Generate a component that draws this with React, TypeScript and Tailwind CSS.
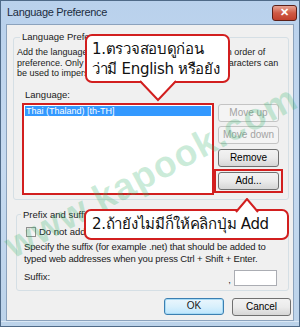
import React from 'react';

const btn =
  'h-[18px] rounded-[3px] border border-[#707070] bg-gradient-to-b from-[#f2f2f2] via-[#ebebeb] to-[#d6d6d6] text-[10px] text-black leading-none';
const btnOff =
  'h-[18px] rounded-[3px] border border-[#c4c4c4] bg-[#f4f4f4] text-[10px] text-[#a3a3a3] leading-none';

const Callout = ({
  className,
  tip,
  children,
}: {
  className: string;
  tip: 'down' | 'up';
  children: React.ReactNode;
}) => (
  <div className={`absolute ${className}`}>
    <div className="relative h-full w-full rounded-[7px] border-2 border-[#d21f1f] bg-white font-['Tahoma','DejaVu_Sans',sans-serif] text-[15px] leading-[19px] whitespace-nowrap text-[#111]">
      {children}
      {tip === 'down' ? (
        <svg className="absolute left-[52px] top-[44px]" width="38" height="22" viewBox="0 0 38 22">
          <polygon points="1,0 19,20 37,0" fill="white" />
          <polyline points="1,1 19,20 37,1" fill="none" stroke="#d21f1f" strokeWidth="2" />
        </svg>
      ) : (
        <svg className="absolute left-[149px] top-[-13px]" width="24" height="15" viewBox="0 0 24 15">
          <polygon points="1,15 12,1 23,15" fill="white" />
          <polyline points="1,14 12,1 23,14" fill="none" stroke="#d21f1f" strokeWidth="2" />
        </svg>
      )}
    </div>
  </div>
);

export default function App() {
  return (
    <div className="relative h-[327px] w-[300px] overflow-hidden border border-[#4f6a88] bg-gradient-to-b from-[#b9d1ec] via-[#c6daf0] to-[#bcd3ea] font-['Liberation_Sans',Arial,sans-serif]">
      {/* title bar */}
      <div className="flex h-[23px] items-center justify-between pl-[6px] pr-[2px]">
        <span className="text-[11px] tracking-[-0.3px] text-[#1c2c40]">Language Preference</span>
        <div className="flex h-[16px] w-[25px] items-center justify-center rounded-[3px] border border-[#5b1f18] bg-gradient-to-b from-[#e6a394] via-[#cf5a45] to-[#c1402c] text-[11px] font-bold leading-none text-white">
          ✕
        </div>
      </div>

      {/* client area */}
      <div className="ml-[5px] flex h-[297px] w-[288px] flex-col border border-[#8ca3bd] bg-[#f0f0f0] text-[9px] leading-[10.5px] text-[#1a1a1a]">
        <fieldset className="ml-[6px] mr-[4px] mt-[6px] rounded-[3px] border border-[#d5dfe5] pb-[4px] pl-[3px]">
          <legend className="ml-[3px] px-[2px] text-[9.5px] leading-[12px]">Language Preference</legend>
          <p className="mt-[4px] whitespace-nowrap">
            Add the languages you use to read websites, listing in order of
            <br />
            preference. Only add the ones you need, as some characters can
            <br />
            be used to impersonate websites.
          </p>
          <div className="ml-[8px] mt-[10px] text-[9.5px] leading-[12px]">Language:</div>
          <div className="mt-[2px] flex">
            <div className="ml-[5px] h-[92px] w-[192px] border-2 border-[#d21f1f] bg-white p-[1px]">
              <div className="h-[10px] bg-[#3399ff] pl-[1px] text-[9px] leading-[10px] text-white">
                Thai (Thaland) [th-TH]
              </div>
            </div>
            <div className="flex w-[69px] flex-col">
              <button className={`${btnOff} mx-[4px] mt-[1px]`}>Move up</button>
              <button className={`${btnOff} mx-[4px] mt-[4px]`}>Move down</button>
              <button className={`${btn} mx-[4px] mt-[5px]`}>Remove</button>
              <div className="mt-[2px] border-2 border-[#d21f1f] p-[1px] px-[2px]">
                <button className={`${btn} w-full`}>Add...</button>
              </div>
            </div>
          </div>
        </fieldset>

        <fieldset className="ml-[9px] mr-[4px] mt-[9px] min-w-0 rounded-[3px] border border-[#d5dfe5] pb-[4px] pl-[7px] pr-[11px]">
          <legend className="ml-[-3px] px-[2px] text-[9.5px] leading-[12px]">Prefix and suffix options</legend>
          <label className="ml-[2px] mt-[5px] flex items-center gap-[3px] overflow-hidden whitespace-nowrap text-[9.5px] leading-[12px]">
            <span className="h-[10px] w-[10px] shrink-0 border border-[#8f8f8f] bg-gradient-to-br from-[#e4e4e4] to-[#fbfbfb]" />
            Do not add &apos;www&apos; to the beginning of typed addresses
          </label>
          <p className="mt-[3px] whitespace-nowrap text-[9.5px] leading-[12px] tracking-[-0.15px]">
            Specify the suffix (for example .net) that should be added to
            <br />
            typed web addresses when you press Ctrl + Shift + Enter.
          </p>
          <div className="mt-[5px] flex items-center text-[9.5px]">
            <span className="flex-1">Suffix:</span>
            <span className="mr-[3px] self-end">,</span>
            <div className="h-[16px] w-[43px] border border-[#abadb3] bg-white" />
          </div>
        </fieldset>

        <div className="mt-[7px] flex justify-end gap-[8px] pr-[2px]">
          <button className="h-[17px] w-[60px] rounded-[3px] border border-[#3c7fb1] bg-gradient-to-b from-[#eaf6fd] via-[#d9f0fc] to-[#bee6fd] text-[10px] leading-none shadow-[inset_0_0_0_1px_#a7dbf6]">
            OK
          </button>
          <button className={`${btn} h-[17px] w-[59px]`}>Cancel</button>
        </div>
      </div>
      <div className="h-[4px] border-t border-[#dbe8f5]" />

      {/* watermark */}
      <div className="pointer-events-none absolute left-[-15px] top-[152px] w-[330px] rotate-[-28deg] text-center text-[37px] font-bold leading-none tracking-[1px] text-[#2fb06a]/25">
        www.kapook.com
      </div>

      <Callout className="left-[84px] top-[33px] h-[49px] w-[145px]" tip="down">
        <div className="pl-[5px] pt-[3px] leading-[20px] tracking-[-0.3px]">
          1.ตรวจสอบดูก่อน
          <br />
          ว่ามี English หรือยัง
        </div>
      </Callout>

      <Callout className="left-[83px] top-[208px] h-[31px] w-[205px]" tip="up">
        <div className="pl-[6px] pt-[4px] tracking-[-0.3px]">2.ถ้ายังไม่มีก็ให้คลิกปุ่ม Add</div>
      </Callout>
    </div>
  );
}
